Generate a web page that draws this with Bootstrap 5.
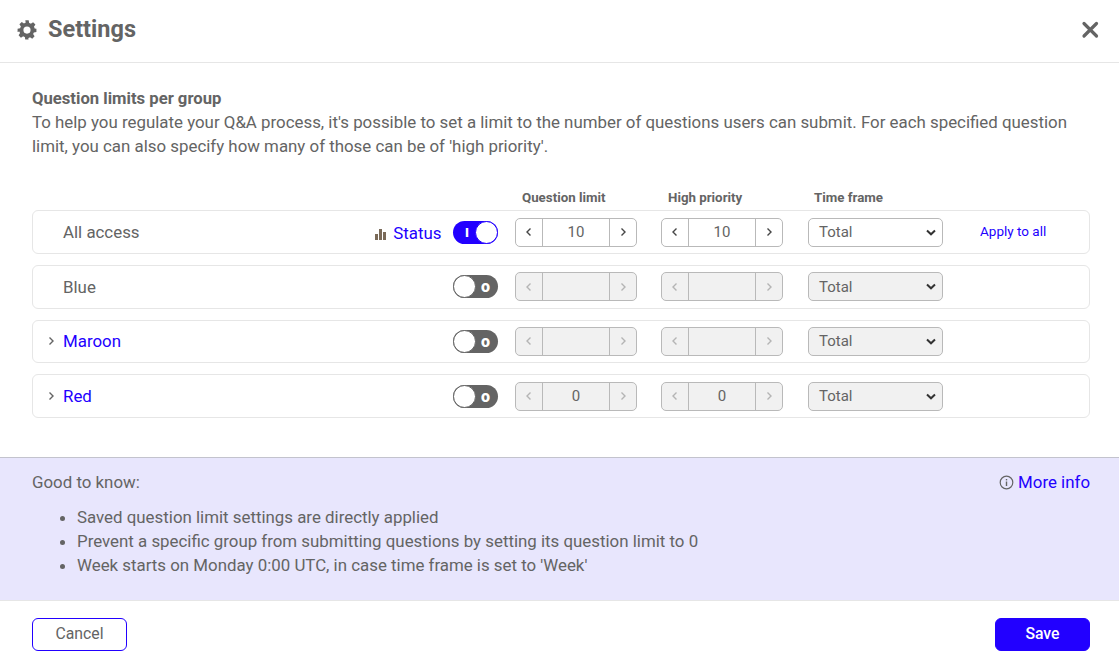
<!DOCTYPE html>
<html lang="en">
<head>
<meta charset="utf-8">
<title>Settings</title>
<link href="https://cdn.jsdelivr.net/npm/bootstrap@5.3.0/dist/css/bootstrap.min.css" rel="stylesheet">
<style>
html,body{height:100%}
body{font-family:Roboto,"Liberation Sans",sans-serif;color:#646464;font-size:16.87px;background:#fff;overflow:hidden}
a{color:#2200ff;text-decoration:none}
.shell{height:665px}
.top-bar{height:63px;border-bottom:1px solid #e6e6e6;padding:0 20px 2px 17px}
.top-head{gap:11px}
.top-title{font-size:23.5px;font-weight:700;line-height:1;color:#646464;margin:0}
.close-x{line-height:0}
.main-area{padding:24px 29px 0 32px;flex:1 1 auto}
.sect-title{font-size:16.66px;font-weight:700;line-height:23px}
.sect-text{line-height:24px;margin:0}
.heads{margin-top:27.45px;height:25px;font-size:13.3px;font-weight:700;line-height:25px}
.hd-a{margin-left:490px;width:146px}
.hd-b{width:146px}
.grp-row{height:43.7px;margin-bottom:10.9px;border:1px solid #e6e6e6;border-radius:6px;background:#fff}
.caret-cell{width:30px;padding-left:14px;line-height:0}
.name-cell{width:311px;padding-top:1px}
.status-cell{width:79px;white-space:nowrap;line-height:1;padding-top:2px}
.status-link{margin-left:2px}
.sw{width:45px;height:23px;border-radius:12px;background:#646464;position:relative;margin-right:17px;flex:none;color:#fff;font-size:16px;font-weight:900;line-height:23px}
.sw i{position:absolute;top:0;left:0;width:23px;height:23px;border-radius:50%;background:#fff;border:1px solid #646464}
.sw b{position:absolute;right:8px;top:0;font-weight:900}
.sw.on{background:#2200ff}
.sw.on i{left:22px;border-color:#2200ff}
.sw.on b{right:auto;left:12px;top:0;font-size:13px}
.stepper{width:122px;height:29px;border:1px solid #b9b9b9;border-radius:5px;margin-right:24px;flex:none;font-size:15px;overflow:hidden}
.stepper span{display:flex;align-items:center;justify-content:center;line-height:0}
.stepper .arr{width:26px;flex:none}
.stepper .val{flex:1 1 auto;border-left:1px solid #b9b9b9;border-right:1px solid #b9b9b9;height:100%;line-height:1}
.stepper.off{background:#f1f1f1;color:#646464}
.stepper.off svg{stroke:#b4b4b4}
.stepper svg{stroke:#464646}
.sel-box{width:135px;height:29px;border:1px solid #b9b9b9;border-radius:5px;margin-left:1px;padding:0 6px 0 10px;flex:none;font-size:15px}
.sel-box.off{background:#f1f1f1}
.apply{margin-left:37px;font-size:13.5px;padding-bottom:2px}
.info-panel{height:144px;background:#e8e6fd;border-top:1px solid #c3c3cd;border-bottom:1px solid #e6e6e6;padding:12px 29px 0 32px;flex:none}
.info-list{margin:10px 0 0;padding-left:45px;line-height:24px}
.bottom-bar{height:64px;padding:17px 29px 0 32px;flex:none}
.act{width:95px;height:33px;border-radius:6px;font-size:15.8px;padding:0 0 2px;line-height:1;display:flex;align-items:center;justify-content:center}
.act-out{border:1px solid #2200ff;color:#646464;background:#fff}
.act-fill{background:#2200ff;border:1px solid #2200ff;color:#fff;font-weight:500}
.act-fill:hover{background:#2200ff;color:#fff}
.act-out:hover{background:#fff;color:#646464;border-color:#2200ff}
</style>
</head>
<body>
<div class="shell d-flex flex-column">
  <header class="top-bar d-flex align-items-center justify-content-between flex-none">
    <div class="d-flex align-items-center top-head">
      <svg width="20" height="20" viewBox="0 0 24 24" fill="#646464"><path fill-rule="evenodd" d="M10 1h4l.6 3.1c.7.2 1.4.5 2 .9l2.7-1.8 2.8 2.8-1.8 2.7c.4.6.7 1.3.9 2L23.3 11v4l-3.1.5c-.2.7-.5 1.4-.9 2l1.8 2.7-2.8 2.8-2.7-1.8c-.6.4-1.3.7-2 .9L13.9 24h-4l-.5-3.1c-.7-.2-1.4-.5-2-.9l-2.7 1.8-2.8-2.8 1.8-2.7c-.4-.6-.7-1.3-.9-2L.7 15v-4l3.1-.6c.2-.7.5-1.4.9-2L2.900 5.700 5.700 2.900l2.700 1.800c.6-.4 1.300-.7 2-.9zM12 8.400a4.300 4.300 0 1 0 0 8.600 4.300 4.300 0 0 0 0-8.600z" transform="translate(0 -.6)"/></svg>
      <h1 class="top-title">Settings</h1>
    </div>
    <a href="#" class="close-x" aria-label="Close"><svg width="18" height="18" viewBox="0 0 18 18" stroke="#646464" stroke-width="3.2" stroke-linecap="round"><path d="M3 2.500 15.500 15M15.500 2.500 3 15"/></svg></a>
  </header>

  <main class="main-area">
    <div class="sect-title">Question limits per group</div>
    <p class="sect-text">To help you regulate your Q&amp;A process, it's possible to set a limit to the number of questions users can submit. For each specified question limit, you can also specify how many of those can be of 'high priority'.</p>
    <div class="heads d-flex">
      <div class="hd-a">Question limit</div>
      <div class="hd-b">High priority</div>
      <div>Time frame</div>
    </div>

    <div class="grp-row d-flex align-items-center">
      <div class="caret-cell"></div>
      <div class="name-cell">All access</div>
      <div class="status-cell"><svg width="13" height="12" viewBox="0 0 13 12" fill="#7a6a58"><rect x="1" y="6" width="3" height="6"/><rect x="5" y="1" width="3" height="11"/><rect x="9" y="4" width="3" height="8"/></svg> <a href="#" class="status-link">Status</a></div>
      <div class="sw on"><b>I</b><i></i></div>
      <div class="stepper d-flex"><span class="arr"><svg width="8" height="10" viewBox="0 0 8 10" fill="none" stroke-width="1.400"><path d="M5.500 1.500 2 5l3.500 3.500"/></svg></span><span class="val">10</span><span class="arr"><svg width="8" height="10" viewBox="0 0 8 10" fill="none" stroke-width="1.400"><path d="M2.500 1.500 6 5 2.500 8.500"/></svg></span></div>
      <div class="stepper d-flex"><span class="arr"><svg width="8" height="10" viewBox="0 0 8 10" fill="none" stroke-width="1.400"><path d="M5.500 1.500 2 5l3.500 3.500"/></svg></span><span class="val">10</span><span class="arr"><svg width="8" height="10" viewBox="0 0 8 10" fill="none" stroke-width="1.400"><path d="M2.500 1.500 6 5 2.500 8.500"/></svg></span></div>
      <div class="sel-box d-flex align-items-center justify-content-between"><span>Total</span><svg width="10" height="7" viewBox="0 0 10 7" fill="none" stroke="#333" stroke-width="2"><path d="M1 1.500 5 5.300 9 1.500"/></svg></div>
      <a href="#" class="apply">Apply to all</a>
    </div>

    <div class="grp-row d-flex align-items-center">
      <div class="caret-cell"></div>
      <div class="name-cell">Blue</div>
      <div class="status-cell"></div>
      <div class="sw"><i></i><b>o</b></div>
      <div class="stepper off d-flex"><span class="arr"><svg width="8" height="10" viewBox="0 0 8 10" fill="none" stroke-width="1.400"><path d="M5.500 1.500 2 5l3.500 3.500"/></svg></span><span class="val"></span><span class="arr"><svg width="8" height="10" viewBox="0 0 8 10" fill="none" stroke-width="1.400"><path d="M2.500 1.500 6 5 2.500 8.500"/></svg></span></div>
      <div class="stepper off d-flex"><span class="arr"><svg width="8" height="10" viewBox="0 0 8 10" fill="none" stroke-width="1.400"><path d="M5.500 1.500 2 5l3.500 3.500"/></svg></span><span class="val"></span><span class="arr"><svg width="8" height="10" viewBox="0 0 8 10" fill="none" stroke-width="1.400"><path d="M2.500 1.500 6 5 2.500 8.500"/></svg></span></div>
      <div class="sel-box off d-flex align-items-center justify-content-between"><span>Total</span><svg width="10" height="7" viewBox="0 0 10 7" fill="none" stroke="#333" stroke-width="2"><path d="M1 1.500 5 5.300 9 1.500"/></svg></div>
    </div>

    <div class="grp-row d-flex align-items-center">
      <div class="caret-cell"><svg width="8" height="10" viewBox="0 0 8 10" fill="none" stroke="#646464" stroke-width="1.400"><path d="M2.500 1.500 6 5 2.500 8.500"/></svg></div>
      <div class="name-cell"><a href="#">Maroon</a></div>
      <div class="status-cell"></div>
      <div class="sw"><i></i><b>o</b></div>
      <div class="stepper off d-flex"><span class="arr"><svg width="8" height="10" viewBox="0 0 8 10" fill="none" stroke-width="1.400"><path d="M5.500 1.500 2 5l3.500 3.500"/></svg></span><span class="val"></span><span class="arr"><svg width="8" height="10" viewBox="0 0 8 10" fill="none" stroke-width="1.400"><path d="M2.500 1.500 6 5 2.500 8.500"/></svg></span></div>
      <div class="stepper off d-flex"><span class="arr"><svg width="8" height="10" viewBox="0 0 8 10" fill="none" stroke-width="1.400"><path d="M5.500 1.500 2 5l3.500 3.500"/></svg></span><span class="val"></span><span class="arr"><svg width="8" height="10" viewBox="0 0 8 10" fill="none" stroke-width="1.400"><path d="M2.500 1.500 6 5 2.500 8.500"/></svg></span></div>
      <div class="sel-box off d-flex align-items-center justify-content-between"><span>Total</span><svg width="10" height="7" viewBox="0 0 10 7" fill="none" stroke="#333" stroke-width="2"><path d="M1 1.500 5 5.300 9 1.500"/></svg></div>
    </div>

    <div class="grp-row d-flex align-items-center">
      <div class="caret-cell"><svg width="8" height="10" viewBox="0 0 8 10" fill="none" stroke="#646464" stroke-width="1.400"><path d="M2.500 1.500 6 5 2.500 8.500"/></svg></div>
      <div class="name-cell"><a href="#">Red</a></div>
      <div class="status-cell"></div>
      <div class="sw"><i></i><b>o</b></div>
      <div class="stepper off d-flex"><span class="arr"><svg width="8" height="10" viewBox="0 0 8 10" fill="none" stroke-width="1.400"><path d="M5.500 1.500 2 5l3.500 3.500"/></svg></span><span class="val">0</span><span class="arr"><svg width="8" height="10" viewBox="0 0 8 10" fill="none" stroke-width="1.400"><path d="M2.500 1.500 6 5 2.500 8.500"/></svg></span></div>
      <div class="stepper off d-flex"><span class="arr"><svg width="8" height="10" viewBox="0 0 8 10" fill="none" stroke-width="1.400"><path d="M5.500 1.500 2 5l3.500 3.500"/></svg></span><span class="val">0</span><span class="arr"><svg width="8" height="10" viewBox="0 0 8 10" fill="none" stroke-width="1.400"><path d="M2.500 1.500 6 5 2.500 8.500"/></svg></span></div>
      <div class="sel-box off d-flex align-items-center justify-content-between"><span>Total</span><svg width="10" height="7" viewBox="0 0 10 7" fill="none" stroke="#333" stroke-width="2"><path d="M1 1.500 5 5.300 9 1.500"/></svg></div>
    </div>
  </main>

  <section class="info-panel">
    <div class="d-flex justify-content-between">
      <div>Good to know:</div>
      <div class="d-flex align-items-center gap-1"><svg width="15" height="15" viewBox="0 0 15 15" fill="none" stroke="#646464"><circle cx="7.500" cy="7.500" r="6.300" stroke-width="1.200"/><path d="M7.500 6.500V11" stroke-width="1.400"/><path d="M7.500 4v1.400" stroke-width="1.400"/></svg><a href="#">More info</a></div>
    </div>
    <ul class="info-list">
      <li>Saved question limit settings are directly applied</li>
      <li>Prevent a specific group from submitting questions by setting its question limit to 0</li>
      <li>Week starts on Monday 0:00 UTC, in case time frame is set to 'Week'</li>
    </ul>
  </section>

  <footer class="bottom-bar d-flex justify-content-between">
    <button class="btn act act-out">Cancel</button>
    <button class="btn act act-fill">Save</button>
  </footer>
</div>
<script src="https://cdn.jsdelivr.net/npm/bootstrap@5.3.0/dist/js/bootstrap.bundle.min.js"></script>
</body>
</html>
